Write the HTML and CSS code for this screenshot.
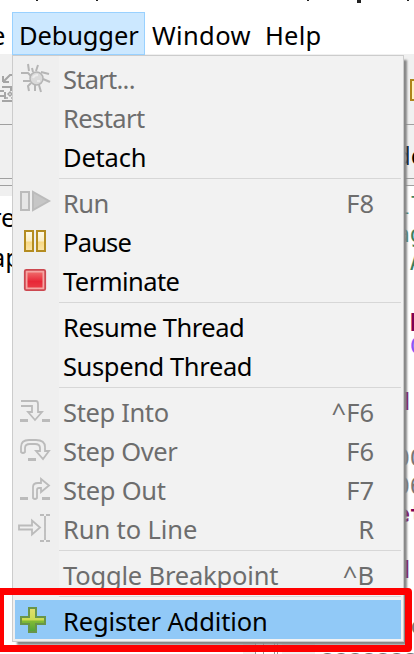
FILE: index.html
```
<!DOCTYPE html>
<html lang="en"><head><meta charset="utf-8"><title>Debugger</title><link rel="stylesheet" href="styles.css"></head>
<body>
<div class="titlebar"><i class="t1"></i><i class="t2"></i><i class="t3"></i><i class="t4"></i><i class="t5"></i></div>
<nav class="menubar"><span class="cut">e</span><span class="active"><b>Debugger</b></span><span class="window">Window</span><span class="help">Help</span></nav>
<div class="toolbar"><svg class="tool" viewBox="0 0 14 30"><path d="M3 8V2M3 8h6M4 7l6-6h4M2 13h9v3h3M0 17h4M5 18v7M2 27h12M0 22h5" fill="none" stroke="#a5a5a5" stroke-width="2"/><path d="M8 20l2-2 2 2-2 2zM6 24h2M11 24h2" fill="none" stroke="#a5a5a5" stroke-width="1.5"/></svg><svg class="gold" viewBox="0 0 4 22"><path d="M5 1H1v20h4" fill="#fff3c2" stroke="#ad851c" stroke-width="2"/></svg></div>
<div class="tabs"><span>de</span></div>
<div class="split"></div>
<main class="workspace"><div class="tree"><p>re</p><p>ap</p></div>
<div class="code"><span class="comment">il</span><span class="comment">ag</span><span class="comment">&nbsp;A</span><span></span><span class="key">&nbsp;p</span><span class="field">&nbsp;C</span><span></span><span class="key">d</span><span></span><span>00</span><span>06</span><span class="key">et</span><span></span><span class="key">d</span><span></span><span>sc</span></div></main>
<footer class="bottom"><div class="edge"></div><div class="rulers"></div><div class="gutter"></div><span>aaaaaaa</span></footer>
<section class="menu">
<div class="item off"><svg viewBox="0 0 44 39"><g fill="none" stroke="#b5b5b5" stroke-width="2"><path d="M14 13l-1-7M18 14l-1-4M21 13l2-6M6 15h7l3 3M26 14l8 2M28 21l7 3M8 23h7M16 25l-3 3 1 5M20 27v6M24 27l2 7"/></g><circle cx="21.5" cy="20.5" r="6.5" fill="#dadada" stroke="#b5b5b5" stroke-width="1.5"/><path d="M18 20q1-3 5-3M22 23h3" fill="none" stroke="#ececec" stroke-width="2"/></svg><span class="w-start">Start...</span></div>
<div class="item off"><span class="w-restart">Restart</span></div>
<div class="item"><span class="w-detach">Detach</span></div>
<hr>
<div class="item off"><svg viewBox="0 0 44 39"><path d="M6 10h8v18H6z" fill="#e6e6e6" stroke="#bbb" stroke-width="2"/><path d="M18 10v18l16-9z" fill="#c6c6c6" stroke="#bbb" stroke-width="2"/></svg><span class="w-run">Run</span><kbd>F8</kbd></div>
<div class="item"><svg viewBox="0 0 44 39"><defs><linearGradient id="g" x2="0" y2="1"><stop offset="0" stop-color="#fffbe9"/><stop offset=".5" stop-color="#faedc4"/><stop offset=".55" stop-color="#f8d984"/><stop offset="1" stop-color="#fbe5aa"/></linearGradient></defs><path d="M10 10h8v20h-8zM22 10h8v20h-8z" fill="url(#g)" stroke="#b48c20" stroke-width="2"/></svg><span class="w-pause">Pause</span></div>
<div class="item"><svg viewBox="0 0 44 39"><defs><linearGradient id="r" x2="0" y2="1"><stop stop-color="#ef6868"/><stop offset=".6" stop-color="#e82737"/><stop offset="1" stop-color="#ea3943"/></linearGradient></defs><rect x="9.8" y="9.8" width="20.4" height="20.4" rx="1.5" fill="#f5a5a2" stroke="#cc4850" stroke-width="1.8"/><path d="M12.5 12.5h15v15h-15z" fill="url(#r)"/></svg><span class="w-terminate">Terminate</span></div>
<hr>
<div class="item"><span class="w-resume">Resume Thread</span></div>
<div class="item"><span class="w-suspend">Suspend Thread</span></div>
<hr>
<div class="item off"><svg viewBox="0 0 44 39"><g class="ico"><path d="M6 10h15q2 0 2 3v8h4l-7 8-7-8h4v-6H6"/><path class="dash" d="M5 29.500h8M27 29.500h8"/></g></svg><span class="w-into">Step Into</span><kbd>^F6</kbd></div>
<div class="item off"><svg viewBox="0 0 44 39"><g class="ico"><path d="M6 22v-5q0-7 8-7h7q9 0 9 7v4h4l-6 8-7-8h4v-3q0-4-5-4h-5q-5 0-5 4v4q-2 2-4 0z"/><path class="dash" d="M13 29.500h8"/></g></svg><span class="w-over">Step Over</span><kbd>F6</kbd></div>
<div class="item off"><svg viewBox="0 0 44 39"><g class="ico"><path d="M18 29V18q0-4 5-4h3v-4l8 6.500-8 6.500v-4h-2q-2 0-2 2v8q-2 2-4 0z"/><path class="dash" d="M5 29.500h8M27 29.500h8"/></g></svg><span class="w-out">Step Out</span><kbd>F7</kbd></div>
<div class="item off"><svg viewBox="0 0 44 39"><g class="ico"><path d="M4 17.500h13v-5l8 7-8 7v-5H4zM30 8v24M25 7h4M31 7h4M25 33h4M31 33h4"/></g></svg><span class="w-line">Run to Line</span><kbd>R</kbd></div>
<hr>
<div class="item off"><span class="w-toggle">Toggle Breakpoint</span><kbd>^B</kbd></div>
<hr>
<div class="item selected"><svg viewBox="0 0 44 39"><defs><linearGradient id="p" x2="0" y2="1"><stop stop-color="#e3df6e"/><stop offset=".5" stop-color="#cbdc50"/><stop offset=".54" stop-color="#83bb37"/><stop offset="1" stop-color="#4da23b"/></linearGradient></defs><path d="M14 8h7v9h9v7h-9v8h-7v-8H6v-7h8z" fill="url(#p)" stroke="#68954a" stroke-width="2"/></svg><span class="w-register">Register Addition</span></div>
</section>
<div class="frame"></div>
</body></html>
```
FILE: styles.css
```
*{box-sizing:border-box}
body{margin:0;width:414px;height:654px;overflow:hidden;position:relative;background:#fff;color:#000;font:25.5px/39px "Noto Sans",sans-serif;white-space:nowrap}
.titlebar{height:12px;display:flex}
.titlebar i{width:2px;height:1px;background:#222}
.t1{margin-left:36px}.t2{margin-left:58px}.t3{margin-left:209px}.titlebar .t4{margin-left:48px;width:4px;height:3px}.t5{margin-left:46px}
.menubar{height:42px;display:flex;line-height:45px}
.menubar b{font-weight:400;letter-spacing:-.15px}
.cut{width:12px;text-indent:-9px;padding-top:1px}
.active{width:133px;height:43px;background:#cce8ff;border:1px solid #99d1ff;padding-left:6px}
.window{padding:1px 0 0 7px;width:120px;letter-spacing:.35px}
.help{padding-top:1px;letter-spacing:.2px}
.toolbar{height:71px;background:#f0f0f0;border-bottom:1px solid #a0a0a0;display:flex;justify-content:space-between}
.tool{width:14px;height:30px;margin-top:20px}
.gold{width:4px;height:22px;margin-top:25px}
.tabs{height:54px;background:#f0f0f0;border-bottom:1px solid #a0a0a0;padding:11px 0 0 395px}
.split{height:7px;background:#f0f0f0;border-bottom:1px solid #a0a0a0}
.workspace{display:grid;grid-template-columns:12px 1fr 18px;height:456px}
.tree{border-top:10px solid #f0f0f0;overflow:hidden;padding-top:2px}
.tree p{margin:0;height:40px;text-indent:-9px}
.code{grid-column:3;font:23px/28px "DejaVu Sans Mono",monospace;color:#777;display:flex;flex-direction:column;padding-top:6px;overflow:hidden}
.code span{height:28px;flex:none}
.code .comment{color:#3f7f5f}
.code .key{color:#7f0055;font-weight:700}
.code .field{color:#8a55f5}
.bottom{height:12px;display:grid;grid-template-columns:12px 27px 33px 1fr;padding-left:243px;font:23px/24px "DejaVu Sans Mono",monospace;color:#777;overflow:hidden}
.edge,.gutter{background:#f0f0f0}
.rulers{background:linear-gradient(90deg,#999 1px,transparent 1px,transparent 8px,#999 8px,#999 9px,transparent 9px,transparent 19px,#999 19px,#999 20px,transparent 20px,transparent 22px,#999 22px,#999 23px,transparent 23px)}
.bottom span{padding:4px 0 0 6px}
.menu{position:absolute;left:12px;top:55px;width:392px;height:587px;padding:2px;border:1px solid #ccc;background:linear-gradient(90deg,#efefef 46px,#f2f2f2 46px);box-shadow:4px 4px 2px -1px #888}
.item{height:39px;display:flex;align-items:center;padding:3px 0 0 48px;position:relative}
.item svg{position:absolute;left:0;top:0;width:44px;height:39px}
.off{color:#6d6d6d}
.item kbd{margin-left:auto;margin-right:27px;font:inherit}
hr{height:1px;margin:3px 0 3px 44px;border:0;background:#d7d7d7}
.w-start{letter-spacing:-.75px}
.w-restart{letter-spacing:-.6px}
.w-detach{letter-spacing:-.2px}
.w-run{letter-spacing:-.6px}
.w-pause{letter-spacing:-.8px}
.w-terminate{letter-spacing:-.55px}
.w-resume{letter-spacing:-.48px}
.w-suspend{letter-spacing:-.38px}
.w-into,.w-over{letter-spacing:-.35px}
.w-out{letter-spacing:-.25px}
.w-line{letter-spacing:-.1px}
.w-toggle{letter-spacing:-.18px}
.w-register{letter-spacing:-.12px}
.ico{fill:none;stroke:#bbb;stroke-width:1.8}
.ico .dash{stroke-width:3}
.selected{background:#91c9f7}
.frame{position:absolute;left:-4px;top:588px;width:416px;height:64px;border:7px solid red;border-left-width:8px;border-radius:4px}
```
